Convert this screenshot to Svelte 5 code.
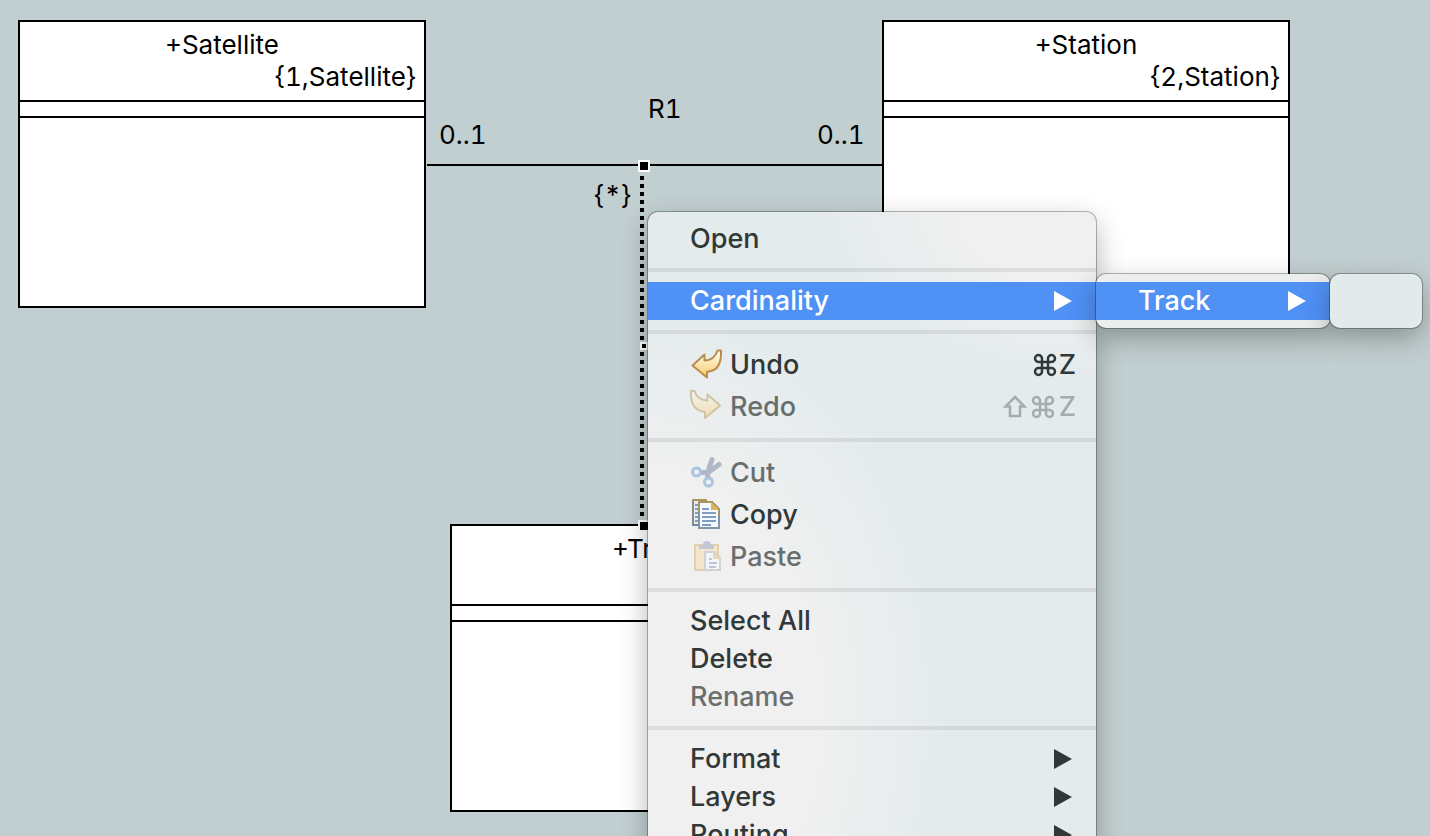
<script>
  const classes = [
    { name: '+Satellite', tag: '{1,Satellite}', x: 18, y: 20 },
    { name: '+Station', tag: '{2,Station}', x: 882, y: 20 },
    { name: '+Track', tag: '', x: 450, y: 524 }
  ];
  const labels = [
    { text: 'R1', x: 648, y: 93 },
    { text: '0..1', x: 439, y: 119 },
    { text: '0..1', x: 817, y: 119 },
    { text: '{*}', x: 594, y: 179 }
  ];
  const groups = [
    [{ label: 'Open' }],
    [{ label: 'Cardinality', sub: true, active: true }],
    [
      { label: 'Undo', icon: 'undo', keys: ['⌘', 'Z'] },
      { label: 'Redo', icon: 'redo', keys: ['⇧', '⌘', 'Z'], off: true }
    ],
    [
      { label: 'Cut', icon: 'cut', off: true },
      { label: 'Copy', icon: 'copy' },
      { label: 'Paste', icon: 'paste', off: true }
    ],
    [{ label: 'Select All' }, { label: 'Delete' }, { label: 'Rename', off: true }],
    [{ label: 'Format', sub: true }, { label: 'Layers', sub: true }, { label: 'Routing', sub: true }]
  ];
</script>

{#snippet arrow()}
  <svg class="arrow" viewBox="0 0 18 20" aria-hidden="true"><path d="M0 0 18 10 0 20Z" fill="currentColor" /></svg>
{/snippet}

{#snippet icon(kind)}
  <svg class="icon" viewBox="0 0 32 32" aria-hidden="true">
    {#if kind === 'undo'}
      <path d="M2.500 16.500 14.500 5.500V11.500C21 11.500 25.500 8 27.500 1.500H31C31.500 14 27.500 21.500 19 22.500L17 23V28.500Z" fill="url(#gold)" stroke="#b98d4c" stroke-width="2" stroke-linejoin="round" />
    {:else if kind === 'redo'}
      <path d="M30 14.500 17.500 3.500V9.500C11 9.500 6.500 6.500 4.500 0H1C.5 12.500 4.500 19.500 13 20.500L15 21V27Z" fill="url(#gold)" stroke="#b09050" stroke-width="2" stroke-linejoin="round" />
    {:else if kind === 'cut'}
      <g fill="none" stroke-linecap="round">
        <path d="M22 2.500 17.500 16M29 7.500 17.500 16" stroke="#637792" stroke-width="5" />
        <path d="M17 15.500 11 15.500M17 16 18 20" stroke="#637792" stroke-width="5" />
        <circle cx="6.500" cy="15" r="4" fill="#e4f1fc" stroke="#5892c8" stroke-width="3" />
        <circle cx="18.500" cy="25" r="4" fill="#e4f1fc" stroke="#5892c8" stroke-width="3" />
      </g>
    {:else if kind === 'copy'}
      <path d="M3 1h14v25H3Z" fill="#e4edf2" />
      <path d="M3 1V26" stroke="#8a8c80" stroke-width="2" />
      <path d="M2 1H16V4" fill="none" stroke="#ab9460" stroke-width="2" />
      <path d="M2 26H9" stroke="#6f87a5" stroke-width="2" />
      <path d="M5 6h3M5 10h3M5 14h3M5 18h3M5 22h3" stroke="#7f9cc2" stroke-width="2" />
      <path d="M9 3h13l7 7v19H9Z" fill="#f4faff" stroke="#ab9460" stroke-width="2" />
      <path d="M9 12V29H29V16" fill="none" stroke="#8595a3" stroke-width="2" />
      <path d="M21 3v8h8Z" fill="#dfb55c" />
      <path d="M12 10h7M12 14h14M12 18h14M12 22h14M12 26h9" stroke="#7f9cc2" stroke-width="2" />
    {:else}
      <path d="M5 4h23v25H5Z" fill="#fad9a2" stroke="#d2a566" stroke-width="2" />
      <path d="M9 8V4h4q0-4 4-4t4 4h3v4Z" fill="#8c98b8" />
      <path d="M15 11h9l6 6v12H15Z" fill="#f7fcff" stroke="#a8b2b8" stroke-width="2" />
      <path d="M23 10v8h8Z" fill="#dcb878" />
      <path d="M19 18h3M19 22h8M19 26h7" stroke="#7393bd" stroke-width="2" />
    {/if}
  </svg>
{/snippet}

{#snippet key(k)}
  {#if k === '⌘'}
    <svg class="glyph" viewBox="0 0 24 24" role="img" aria-label="Command"><path d="M9 9V5.500A3.500 3.500 0 1 0 5.500 9H18.500A3.500 3.500 0 1 0 15 5.500V18.500A3.500 3.500 0 1 0 18.500 15H5.500A3.500 3.500 0 1 0 9 18.500Z" /></svg>
  {:else if k === '⇧'}
    <svg class="glyph" viewBox="0 0 24 24" role="img" aria-label="Shift"><path d="M12 2 21.500 11.500H17V21H7V11.500H2.500Z" /></svg>
  {:else}
    {k}
  {/if}
{/snippet}

<main class="canvas">
  <svg class="wires" aria-hidden="true">
    <defs>
      <linearGradient id="gold" x1="0" y1="0" x2="0" y2="1">
        <stop offset="0.200" stop-color="#fff6dc" />
        <stop offset="1" stop-color="#f8c765" />
      </linearGradient>
    </defs>
    <path d="M427 165H882" stroke="#000" stroke-width="2" />
    <path d="M642 176V522" stroke="#000" stroke-width="4" stroke-dasharray="4 4" />
  </svg>

  {#each classes as c}
    <section class="node" style:left="{c.x}px" style:top="{c.y}px">
      <header>
        <div class="name">{c.name}</div>
        <div class="tag">{c.tag}</div>
      </header>
      <div class="attrs"></div>
      <div class="ops"></div>
    </section>
  {/each}

  {#each labels as l}
    <span class="label" style:left="{l.x}px" style:top="{l.y}px">{l.text}</span>
  {/each}

  <i class="handle" style:left="638px" style:top="160px"></i>
  <i class="handle small" style:left="640px" style:top="342px"></i>
  <i class="handle" style:left="638px" style:top="520px"></i>

  <nav class="menu main" aria-label="Context menu">
    {#each groups as group}
      <div class="group">
        {#each group as item}
          <button class="row" class:tall={item.icon} class:active={item.active} disabled={item.off}>
            {#if item.icon}{@render icon(item.icon)}{/if}
            <span class="text">{item.label}</span>
            {#if item.keys}
              <span class="keys">
                {#each item.keys as k}
                  <kbd>{@render key(k)}</kbd>
                {/each}
              </span>
            {/if}
            {#if item.sub}{@render arrow()}{/if}
          </button>
        {/each}
      </div>
    {/each}
  </nav>

  <nav class="menu second" aria-label="Cardinality">
    <button class="row active"><span class="text">Track</span>{@render arrow()}</button>
  </nav>
  <nav class="menu third" aria-label="Track"></nav>
</main>

<style>
  :global(body) {
    margin: 0;
  }
  .canvas {
    position: relative;
    height: 100vh;
    overflow: hidden;
    background: #c2cfd0;
    color: #000;
    font-family: Inter, 'Liberation Sans', sans-serif;
    font-size: 26px;
    font-variant-numeric: tabular-nums;
    line-height: 32px;
  }
  .wires {
    position: absolute;
    inset: 0;
    width: 100%;
    height: 100%;
  }
  .node {
    position: absolute;
    display: flex;
    flex-direction: column;
    box-sizing: border-box;
    width: 408px;
    height: 288px;
    border: 2px solid #000;
    background: #fff;
  }
  header {
    height: 71px;
    padding: 7px 8px 0;
    border-bottom: 2px solid #000;
  }
  .name {
    text-align: center;
  }
  .tag {
    text-align: right;
  }
  .attrs {
    height: 14px;
    border-bottom: 2px solid #000;
  }
  .ops {
    flex: 1;
  }
  .label {
    position: absolute;
    white-space: nowrap;
  }
  .handle {
    position: absolute;
    width: 8px;
    height: 8px;
    border: 2px solid #fff;
    background: #000;
  }
  .handle.small {
    width: 4px;
    height: 4px;
  }
  .menu {
    position: absolute;
    box-sizing: border-box;
    padding: 8px 0;
    border-radius: 10px;
    background: #e5ecec;
    box-shadow:
      0 0 0 1px rgba(0, 0, 0, 0.28),
      0 10px 28px rgba(0, 0, 0, 0.3);
    font-size: 27px;
    font-weight: 450;
  }
  .main {
    left: 648px;
    top: 212px;
    width: 448px;
    background:
      radial-gradient(ellipse 300px 420px at 0 500px, #f0f0f0 55%, transparent),
      radial-gradient(ellipse 280px 170px at 100% 0, #f0f0f0 45%, transparent),
      #e4ebec;
  }
  .second {
    left: 1096px;
    top: 274px;
    width: 234px;
    background: #eceeee;
  }
  .third {
    left: 1330px;
    top: 274px;
    width: 92px;
    height: 54px;
    background: #e3eaea;
  }
  .group + .group {
    margin-top: 10px;
    padding-top: 10px;
    border-top: 4px solid rgba(0, 0, 0, 0.08);
  }
  .row {
    display: flex;
    align-items: center;
    box-sizing: border-box;
    width: 100%;
    height: 38px;
    padding: 0 20px 0 42px;
    border: 0;
    background: none;
    color: #303838;
    font: inherit;
    text-align: left;
  }
  .row.tall {
    height: 42px;
  }
  .row.active {
    background: #5091f6;
    color: #fff;
  }
  .row:disabled .text {
    opacity: 0.7;
  }
  .row:disabled .icon {
    opacity: 0.45;
  }
  .row:disabled .keys {
    gap: 4px;
    opacity: 0.35;
  }
  .text {
    flex: 1;
    white-space: nowrap;
  }
  .icon {
    width: 32px;
    height: 32px;
    margin-right: 8px;
    overflow: visible;
  }
  .arrow {
    width: 18px;
    height: 20px;
    margin-right: 4px;
  }
  .keys {
    display: flex;
    align-items: center;
    gap: 2px;
  }
  kbd {
    display: flex;
    font: inherit;
  }
  .glyph {
    width: 24px;
    height: 24px;
    fill: none;
    stroke: currentColor;
    stroke-width: 2.500;
  }
</style>
